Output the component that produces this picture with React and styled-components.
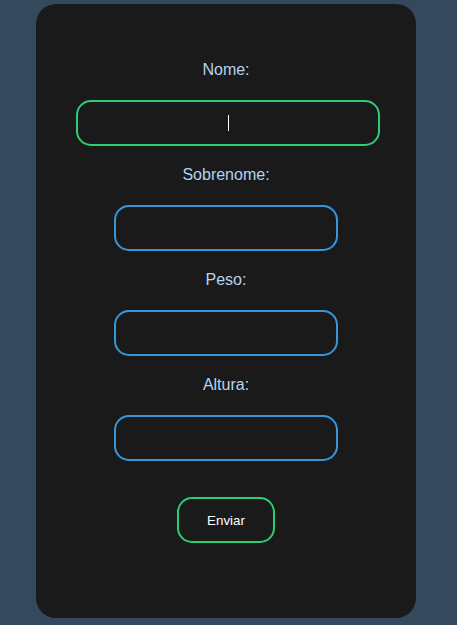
import React from "react";
import styled, { createGlobalStyle } from "styled-components";

const GlobalStyle = createGlobalStyle`
  body {
    margin: 0;
    background: #34495e;
    font-family: "Liberation Sans", Arial, sans-serif;
  }
`;

const Card = styled.form`
  width: 380px;
  margin: 4px 0 0 36px;
  box-sizing: border-box;
  padding: 57px 0 75px;
  background: #1a1a1a;
  border-radius: 20px;
  display: flex;
  flex-direction: column;
  align-items: center;
`;

const Field = styled.div`
  display: flex;
  flex-direction: column;
  align-items: center;
  margin-bottom: 20px;
`;

const Label = styled.label`
  color: #b3d4f0;
  font-size: 16px;
  line-height: 18px;
  margin-bottom: 21px;
`;

const InputWrap = styled.div`
  position: relative;
  margin-left: ${({ $active }) => ($active ? "4px" : "0")};
`;

const Input = styled.input`
  display: block;
  width: ${({ $active }) => ($active ? "304px" : "224px")};
  height: 46px;
  box-sizing: border-box;
  background: #1a1a1a;
  border: 2px solid ${({ $active }) => ($active ? "#2ecc71" : "#3498db")};
  border-radius: 15px;
  color: #fff;
  font-family: "Liberation Sans", Arial, sans-serif;
  font-size: 14px;
  text-align: center;
  outline: none;
  caret-color: transparent;
`;

const Caret = styled.span`
  position: absolute;
  left: 152px;
  top: 15px;
  width: 1px;
  height: 16px;
  background: #fff;
  pointer-events: none;
`;

const Submit = styled.button`
  margin-top: 16px;
  width: 98px;
  height: 46px;
  background: transparent;
  border: 2px solid #2ecc71;
  border-radius: 15px;
  color: #fff;
  font-family: "Liberation Sans", Arial, sans-serif;
  font-size: 13.33px;
  cursor: pointer;
`;

const fields = [
  { id: "nome", label: "Nome:", active: true },
  { id: "sobrenome", label: "Sobrenome:" },
  { id: "peso", label: "Peso:" },
  { id: "altura", label: "Altura:" },
];

export default function App() {
  return (
    <>
      <GlobalStyle />
      <Card onSubmit={(e) => e.preventDefault()}>
        {fields.map((f) => (
          <Field key={f.id}>
            <Label htmlFor={f.id}>{f.label}</Label>
            <InputWrap $active={f.active}>
              <Input id={f.id} type="text" $active={f.active} />
              {f.active && <Caret />}
            </InputWrap>
          </Field>
        ))}
        <Submit type="submit">Enviar</Submit>
      </Card>
    </>
  );
}
